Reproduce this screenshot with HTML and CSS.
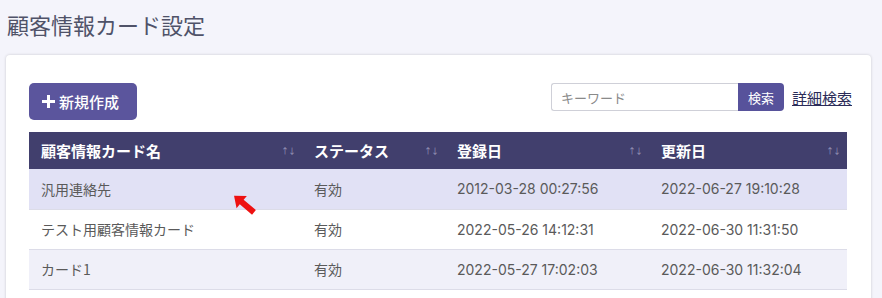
FILE: index.html
```html
<!DOCTYPE html>
<html lang="ja">
<head>
  <meta charset="UTF-8" />
  <title>顧客情報カード設定</title>
  <link rel="stylesheet" href="styles.css">
</head>
<body>
  <h1 class="page-title">顧客情報カード設定</h1>

  <div class="card">
    <div class="toolbar">
      <button class="btn-new">
        <svg class="plus" width="13" height="13" viewBox="0 0 13 13"><path d="M5 0h3v5h5v3H8v5H5V8H0V5h5z" fill="#fff"/></svg>
        新規作成
      </button>
      <div class="search">
        <input type="text" class="search-input" placeholder="キーワード" />
        <button class="btn-search">検索</button>
        <a href="#" class="adv-link">詳細検索</a>
      </div>
    </div>

    <table class="list">
      <thead>
        <tr>
          <th class="c1">顧客情報カード名<span class="sort">↑↓</span></th>
          <th class="c2">ステータス<span class="sort">↑↓</span></th>
          <th class="c3">登録日<span class="sort">↑↓</span></th>
          <th class="c4">更新日<span class="sort">↑↓</span></th>
        </tr>
      </thead>
      <tbody>
        <tr class="hover">
          <td>汎用連絡先</td>
          <td>有効</td>
          <td class="num">2012-03-28 00:27:56</td>
          <td class="num">2022-06-27 19:10:28</td>
        </tr>
        <tr>
          <td>テスト用顧客情報カード</td>
          <td>有効</td>
          <td class="num">2022-05-26 14:12:31</td>
          <td class="num">2022-06-30 11:31:50</td>
        </tr>
        <tr class="odd">
          <td>カード1</td>
          <td>有効</td>
          <td class="num">2022-05-27 17:02:03</td>
          <td class="num">2022-06-30 11:32:04</td>
        </tr>
      </tbody>
    </table>
  </div>

  <svg class="cursor" width="24" height="22" viewBox="0 0 24 22">
    <g transform="translate(11 11) rotate(-50) translate(-8 -13)">
      <path d="M8 0 L16 10 L11 10 L11 26 L5 26 L5 10 L0 10 Z" fill="#ee1111"/>
    </g>
  </svg>
</body>
</html>
```

FILE: styles.css
```css
body {
  margin: 0;
  padding: 0 11px 0 6px;
  background-color: #f4f4fb;
  font-family: Inter, "Noto Sans CJK JP", sans-serif;
  color: #555;
}
.page-title {
  margin: 0;
  padding: 8px 0 0 1px;
  height: 46px;
  box-sizing: border-box;
  font-size: 22px;
  font-weight: 400;
  color: #4f5268;
}
.card {
  background: #fff;
  border-radius: 4px;
  box-shadow: 0 0 3px rgba(0, 0, 0, 0.18);
  padding: 28px 23px 20px;
  margin-top: 9px;
}
.toolbar {
  display: flex;
  justify-content: space-between;
  align-items: flex-start;
  margin-bottom: 12px;
}
.btn-new {
  display: flex;
  align-items: center;
  gap: 4px;
  height: 37px;
  width: 108px;
  padding: 0 0 0 13px;
  border: none;
  border-radius: 5px;
  background: #5b559d;
  color: #fff;
  font-family: "Noto Sans CJK JP", sans-serif;
  font-size: 15px;
  font-weight: 500;
}
.search {
  display: flex;
  align-items: center;
  margin-right: -4px;
}
.search-input {
  width: 187px;
  height: 28px;
  box-sizing: border-box;
  border: 1px solid #cfd0d8;
  border-right: none;
  border-radius: 3px 0 0 3px;
  padding: 0 9px;
  font-family: "Noto Sans CJK JP", sans-serif;
  font-size: 13px;
}
.search-input::placeholder {
  color: #8a8a8a;
}
.btn-search {
  height: 28px;
  width: 46px;
  border: none;
  border-radius: 0 4px 4px 0;
  background: #57529b;
  color: #fff;
  font-family: "Noto Sans CJK JP", sans-serif;
  font-size: 13px;
  padding: 0;
}
.adv-link {
  margin-left: 8px;
  color: #2b2c58;
  font-family: "Noto Sans CJK JP", sans-serif;
  font-size: 15px;
  text-decoration: underline;
}
.list {
  width: 818px;
  border-collapse: collapse;
  font-size: 14px;
}
.list th {
  position: relative;
  background: #413f6d;
  color: #fff;
  text-align: left;
  font-family: "Noto Sans CJK JP", sans-serif;
  font-weight: 700;
  font-size: 15px;
  height: 37px;
  padding: 0 12px;
  box-sizing: border-box;
}
.list th.c1 { width: 273px; }
.list th.c2 { width: 143px; }
.list th.c3 { width: 204px; }
.sort {
  position: absolute;
  right: 7px;
  top: 13px;
  font-size: 8px;
  font-weight: 400;
  letter-spacing: -1px;
  color: #9d9cbc;
}
.list td {
  height: 40px;
  padding: 0 12px;
  box-sizing: border-box;
  border-bottom: 1px solid #dcdce8;
  color: #5a5a5a;
  font-family: "Noto Sans CJK JP", sans-serif;
}
.list td.num {
  font-family: Inter, sans-serif;
  font-size: 14px;
  color: #5a5a5a;
}
.list tr.hover td {
  background: #e1e1f5;
}
.list tr.odd td {
  background: #f0f0f9;
}
.cursor {
  position: absolute;
  left: 233px;
  top: 193px;
}
```
